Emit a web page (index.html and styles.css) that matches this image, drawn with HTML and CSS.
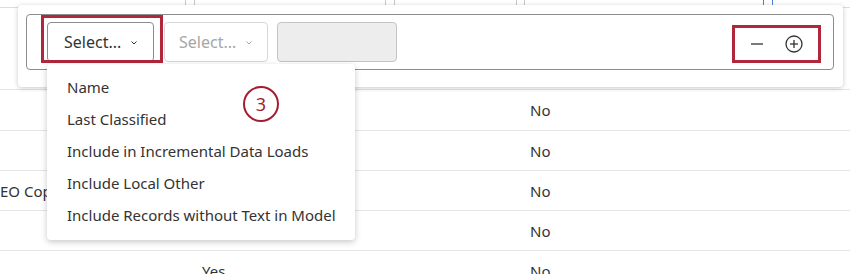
FILE: index.html
```html
<!DOCTYPE html>
<html lang="en">
<head>
<meta charset="UTF-8" />
<meta name="viewport" content="width=device-width, initial-scale=1" />
<title>Filter select</title>
<link rel="stylesheet" href="styles.css">
</head>
<body>
  <div class="grid">
    <div class="grid-head">
      <span class="col c1"></span><span class="col c2"></span><span class="col c3"></span>
      <span class="col c4"></span><span class="col c5"></span><span class="col c6"></span>
      <span class="col c7"></span><span class="col c8 blue"></span><span class="col c9 blue"></span>
    </div>
    <div class="row first"></div>
    <div class="row second"><span class="cell name"></span><span class="cell val"></span><span class="cell flag">No</span></div>
    <div class="row"><span class="cell name"></span><span class="cell val"></span><span class="cell flag">No</span></div>
    <div class="row"><span class="cell name">EO Copy</span><span class="cell val"></span><span class="cell flag">No</span></div>
    <div class="row"><span class="cell name"></span><span class="cell val"></span><span class="cell flag">No</span></div>
    <div class="row"><span class="cell name"></span><span class="cell val">Yes</span><span class="cell flag">No</span></div>
  </div>

  <!-- filter popover -->
  <div class="popover">
    <div class="filter-box">
      <button class="select">Select...
        <svg class="chev" width="6" height="4" viewBox="0 0 6 4"><polyline points="0.5,0.5 3,3 5.5,0.5" fill="none" stroke="currentColor" stroke-width="1"/></svg>
      </button>
      <button class="select disabled">Select...
        <svg class="chev" width="6" height="4" viewBox="0 0 6 4"><polyline points="0.5,0.5 3,3 5.5,0.5" fill="none" stroke="currentColor" stroke-width="1"/></svg>
      </button>
      <div class="value-box"></div>
      <div class="actions">
        <svg width="12" height="12" viewBox="0 0 12 12"><line x1="0" y1="6" x2="12" y2="6" stroke="#333" stroke-width="1.3"/></svg>
        <svg width="18" height="18" viewBox="0 0 18 18"><circle cx="9" cy="9" r="8" fill="none" stroke="#333" stroke-width="1.3"/><line x1="5" y1="9" x2="13" y2="9" stroke="#333" stroke-width="1.3"/><line x1="9" y1="5" x2="9" y2="13" stroke="#333" stroke-width="1.3"/></svg>
      </div>
    </div>
  </div>

  <div class="mark mark-select"></div>
  <div class="mark mark-actions"></div>

  <ul class="menu">
    <li>Name</li>
    <li>Last Classified</li>
    <li>Include in Incremental Data Loads</li>
    <li>Include Local Other</li>
    <li>Include Records without Text in Model</li>
  </ul>

  <div class="step">3</div>
</body>
</html>
```

FILE: styles.css
```css
body {
  margin: 0;
  font-family: 'Noto Sans', 'Open Sans', sans-serif;
  color: #333;
  background: #fff;
  overflow: hidden;
}
.grid-head {
  height: 7px;
  border-bottom: 1px solid #dcdcdc;
  display: grid;
  grid-template-columns: 185px 9px 191px 9px 122px 8px 239px 9px 71px 7px;
}
.col { border-left: 1px solid #c8c8c8; }
.col.c1 { border-left: none; }
.col.blue { border-left-color: #4a7fd1; }
.row {
  height: 39px;
  border-bottom: 1px solid #e5e5e5;
  display: grid;
  grid-template-columns: 202px 328px 1fr;
  align-items: center;
  font-size: 15px;
}
.row.first { height: 81px; }
.row.second { height: 40px; }
.cell.name { white-space: nowrap; }
.popover {
  position: absolute;
  left: 18px;
  top: 5px;
  width: 825px;
  height: 82px;
  background: #fff;
  border-radius: 4px;
  box-shadow: 0 1px 5px rgba(0,0,0,0.22);
  padding: 9px 9px 0 8px;
  box-sizing: border-box;
}
.filter-box {
  height: 56px;
  border: 1px solid #8d8d8d;
  border-radius: 4px;
  display: flex;
  align-items: flex-start;
  padding: 7px 0 0 20px;
  box-sizing: border-box;
}
.select {
  height: 40px;
  width: 107px;
  border: 1px solid #8d8d8d;
  border-radius: 4px;
  background: #fff;
  font-family: inherit;
  font-size: 16px;
  color: #333;
  padding: 0 0 0 16px;
  text-align: left;
  display: flex;
  align-items: center;
  gap: 10px;
}
.select.disabled {
  width: 104px;
  margin-left: 10px;
  border-color: #d6d6d6;
  color: #a6a6a6;
  padding-left: 14px;
}
.chev { margin-top: 2px; }
.value-box {
  width: 120px;
  height: 40px;
  margin-left: 9px;
  background: #ededed;
  border: 1px solid #c4c4c4;
  border-radius: 4px;
  box-sizing: border-box;
}
.actions {
  margin-left: auto;
  margin-right: 30px;
  margin-top: 13px;
  display: flex;
  align-items: center;
  gap: 22px;
}
.mark {
  position: absolute;
  border: 3px solid #b0263a;
  box-sizing: border-box;
}
.mark-select { left: 41px; top: 15px; width: 122px; height: 48px; }
.mark-actions { left: 732px; top: 25px; width: 89px; height: 38px; }
.menu {
  position: absolute;
  left: 47px;
  top: 64px;
  width: 308px;
  margin: 0;
  padding: 7px 0 9px;
  list-style: none;
  background: #fff;
  border-radius: 4px;
  box-shadow: 0 2px 6px rgba(0,0,0,0.22);
  box-sizing: border-box;
}
.menu li {
  height: 32px;
  line-height: 32px;
  padding-left: 20px;
  font-size: 15px;
  white-space: nowrap;
}
.step {
  position: absolute;
  left: 243px;
  top: 86px;
  width: 36px;
  height: 36px;
  border: 2.5px solid #a51d30;
  border-radius: 50%;
  box-sizing: border-box;
  color: #a51d30;
  font-size: 18px;
  display: flex;
  align-items: center;
  justify-content: center;
}
```
